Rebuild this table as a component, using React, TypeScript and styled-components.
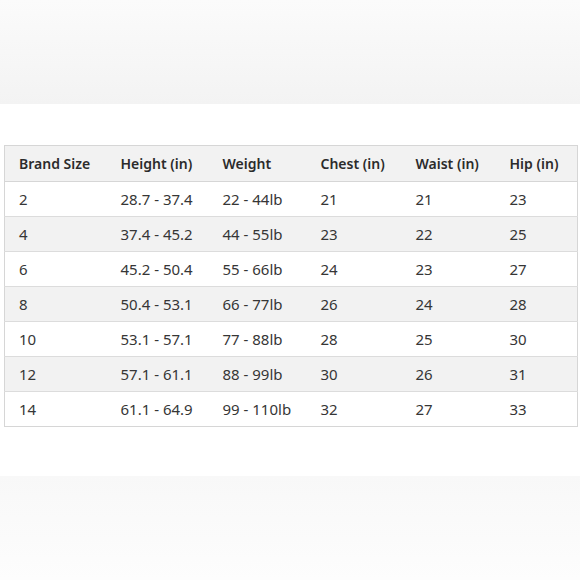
import React from "react";
import styled, { createGlobalStyle } from "styled-components";

const Global = createGlobalStyle`
  html, body { margin: 0; padding: 0; background: #ffffff; }
  body { font-family: "Noto Sans", "Open Sans", sans-serif; }
`;

const Page = styled.div`
  width: 580px;
  height: 580px;
  display: flex;
  flex-direction: column;
  overflow: hidden;
`;

const TopBand = styled.div`
  height: 104px;
  flex: none;
  background: linear-gradient(to bottom, #fbfbfb 0%, #f7f7f7 50%, #f3f3f3 100%);
`;

const Middle = styled.div`
  flex: 1;
  padding: 41px 3px 0 4px;
`;

const BottomBand = styled.div`
  height: 104px;
  flex: none;
  background: linear-gradient(to bottom, #f8f8f8 0%, #fbfbfb 60%, #fdfdfd 100%);
`;

const Table = styled.table`
  width: 573px;
  border-collapse: collapse;
  table-layout: fixed;
  border: 1px solid #d6d6d6;
  color: #333333;
`;

const HeadCell = styled.th`
  text-align: left;
  font-weight: 600;
  font-size: 14px;
  height: 35px;
  padding: 0 0 0 14px;
  background: #f2f2f2;
  border-bottom: 1px solid #d6d6d6;
  color: #2b2b2b;
  white-space: nowrap;
`;

const Row = styled.tr<{ $alt: boolean }>`
  background: ${(p) => (p.$alt ? "#f2f2f2" : "#ffffff")};
`;

const Cell = styled.td`
  height: 34px;
  padding: 0 0 0 14px;
  font-size: 15px;
  line-height: 18px;
  border-top: 1px solid #dcdcdc;
  white-space: nowrap;
  color: #363636;
`;

const widths = [102, 102, 98, 95, 94, 82];
const headers = ["Brand Size", "Height (in)", "Weight", "Chest (in)", "Waist (in)", "Hip (in)"];
const rows = [
  ["2", "28.7 - 37.4", "22 - 44lb", "21", "21", "23"],
  ["4", "37.4 - 45.2", "44 - 55lb", "23", "22", "25"],
  ["6", "45.2 - 50.4", "55 - 66lb", "24", "23", "27"],
  ["8", "50.4 - 53.1", "66 - 77lb", "26", "24", "28"],
  ["10", "53.1 - 57.1", "77 - 88lb", "28", "25", "30"],
  ["12", "57.1 - 61.1", "88 - 99lb", "30", "26", "31"],
  ["14", "61.1 - 64.9", "99 - 110lb", "32", "27", "33"],
];

export default function App() {
  return (
    <>
      <Global />
      <Page>
        <TopBand />
        <Middle>
          <Table>
            <colgroup>
              {widths.map((w, i) => (
                <col key={i} style={{ width: w }} />
              ))}
            </colgroup>
            <thead>
              <tr>
                {headers.map((h) => (
                  <HeadCell key={h}>{h}</HeadCell>
                ))}
              </tr>
            </thead>
            <tbody>
              {rows.map((r, i) => (
                <Row key={i} $alt={i % 2 === 1}>
                  {r.map((c, j) => (
                    <Cell key={j}>{c}</Cell>
                  ))}
                </Row>
              ))}
            </tbody>
          </Table>
        </Middle>
        <BottomBand />
      </Page>
    </>
  );
}
